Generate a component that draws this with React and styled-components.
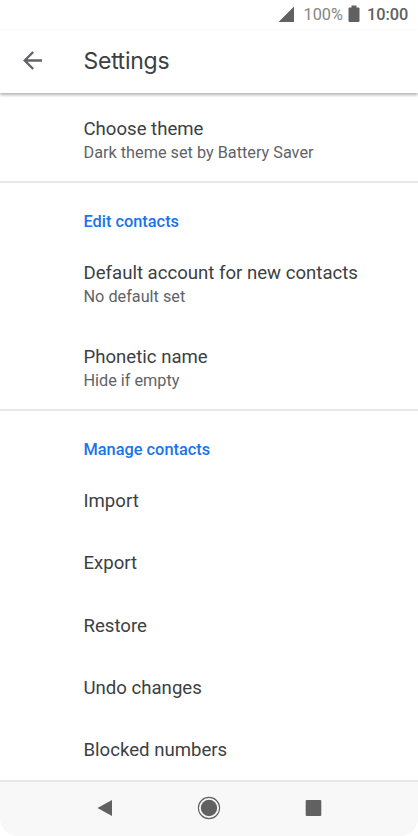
import React from 'react';
import styled, { createGlobalStyle } from 'styled-components';

const GlobalStyle = createGlobalStyle`
  * { box-sizing: border-box; }
  body { margin: 0; background: #fff; font-family: Roboto, sans-serif; }
`;

const Screen = styled.div`
  width: 418px;
  height: 836px;
  display: flex;
  flex-direction: column;
  overflow: hidden;
  background: #fff;
`;

const StatusBar = styled.div`
  height: 30px;
  flex: none;
  display: flex;
  justify-content: flex-end;
  padding-right: 10px;
  font-size: 16.3px;
  line-height: 30px;
  color: #616161;
`;

const SignalIcon = styled.svg`
  width: 17px;
  height: 17px;
  margin: 6px 9px 0 0;
`;

const BatteryLevel = styled.span`
  width: 40px;
  color: #858585;
  white-space: nowrap;
`;

const BatteryIcon = styled.svg`
  width: 12px;
  height: 18px;
  margin: 5px 7.5px 0 4px;
`;

const Clock = styled.span`
  width: 41px;
  font-weight: 500;
  white-space: nowrap;
`;

const AppBar = styled.header`
  height: 63px;
  flex: none;
  display: flex;
  align-items: center;
  padding: 0 0 2px 22px;
  box-shadow: 0 2px 3px rgba(0, 0, 0, 0.3);
`;

const BackIcon = styled.svg`
  width: 21px;
  height: 21px;
  margin-right: 40.5px;
`;

const Title = styled.h1`
  margin: 0;
  font: 400 23px/30px Inter, sans-serif;
  letter-spacing: -0.25px;
  color: #3c4043;
`;

const Tight = styled.span`
  letter-spacing: -1.1px;
`;

const Content = styled.main`
  height: 687px;
  flex: none;
`;

const Section = styled.section`
  height: ${(p) => p.$height}px;
  padding: ${(p) => p.$top}px 0 0 83.5px;
  border-bottom: ${(p) => (p.$last ? 0 : 2)}px solid #e8e8e8;
`;

const SectionTitle = styled.h2`
  margin: 0;
  height: 19px;
  font-size: 16.35px;
  font-weight: 500;
  line-height: 20px;
  color: #1a73e8;
`;

const Preference = styled.div`
  height: ${(p) => p.$height}px;
  padding-top: ${(p) => p.$top || 0}px;
`;

const Label = styled.div`
  font-size: 18.6px;
  line-height: 24px;
  color: #3c4043;
`;

const Summary = styled.div`
  font-size: 16.26px;
  line-height: 24px;
  color: #5f6368;
`;

const NavBar = styled.nav`
  height: 56px;
  flex: none;
  display: flex;
  background: #f8f8f8;
  border-top: 2px solid #e8e8e8;
  border-radius: 0 0 18px 18px;
`;

const NavIcon = styled.svg`
  width: 24px;
  height: 24px;
  margin: 14px 0 0 ${(p) => p.$gap}px;
`;

const actions = ['Import', 'Export', 'Restore', 'Undo changes', 'Blocked numbers'];

export default function App() {
  return (
    <>
      <GlobalStyle />
      <Screen>
        <StatusBar>
          <SignalIcon viewBox="0 0 17 17">
            <path d="M16 .5V16H.5z" fill="#616161" />
          </SignalIcon>
          <BatteryLevel>100%</BatteryLevel>
          <BatteryIcon viewBox="0 0 12 18">
            <path d="M3.500 .5h5v2h2q1 0 1 1V16q0 1-1 1h-9q-1 0-1-1V3.500q0-1 1-1h2z" fill="#616161" />
          </BatteryIcon>
          <Clock>10:00</Clock>
        </StatusBar>
        <AppBar>
          <BackIcon viewBox="0 0 21 21" fill="none" stroke="#5f6368" strokeWidth="2.300">
            <path d="M20 10.500H3M11.200 2L2.700 10.500l8.500 8.500" />
          </BackIcon>
          <Title>Se<Tight>t</Tight>tings</Title>
        </AppBar>
        <Content>
          <Section $height={90} $top={24}>
            <Label>Choose theme</Label>
            <Summary>Dark theme set by Battery Saver</Summary>
          </Section>
          <Section $height={228} $top={29}>
            <SectionTitle>Edit contacts</SectionTitle>
            <Preference $height={84} $top={30}>
              <Label>Default account for new contacts</Label>
              <Summary>No default set</Summary>
            </Preference>
            <Preference $height={84} $top={30}>
              <Label>Phonetic name</Label>
              <Summary>Hide if empty</Summary>
            </Preference>
          </Section>
          <Section $height={369} $top={29} $last>
            <SectionTitle>Manage contacts</SectionTitle>
            {actions.map((name) => (
              <Preference key={name} $height={62.3} $top={30}>
                <Label>{name}</Label>
              </Preference>
            ))}
          </Section>
        </Content>
        <NavBar>
          <NavIcon viewBox="0 0 24 24" $gap={93}>
            <path d="M19 4v16L4.500 12z" fill="#616161" />
          </NavIcon>
          <NavIcon viewBox="0 0 24 24" $gap={80}>
            <circle cx="12" cy="12" r="8.200" fill="#616161" />
            <circle cx="12" cy="12" r="10.600" fill="none" stroke="#616161" strokeWidth="1.100" />
          </NavIcon>
          <NavIcon viewBox="0 0 24 24" $gap={80}>
            <rect x="4.700" y="4" width="15.600" height="16" rx="1" fill="#616161" />
          </NavIcon>
        </NavBar>
      </Screen>
    </>
  );
}
